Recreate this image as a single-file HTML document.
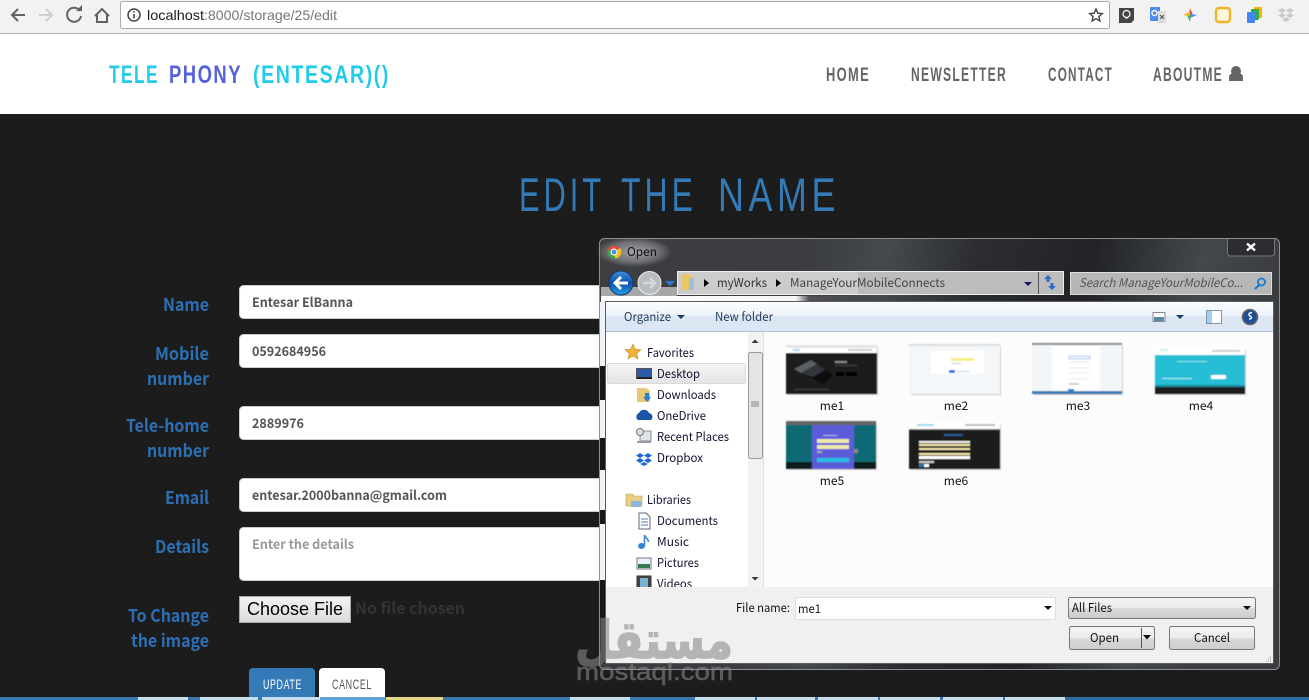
<!DOCTYPE html>
<html><head><meta charset="utf-8"><title>Edit</title>
<style>
html,body{margin:0;padding:0;background:#1c1c1c;overflow:hidden}
svg{display:block}
.d{font-family:"Liberation Sans",sans-serif}
.u{text-transform:uppercase}
.l{font-family:"Noto Sans CJK JP","Liberation Sans",sans-serif;font-weight:700;font-size:17.500px;fill:#2d6fb4}
.i{font-family:"Noto Sans CJK JP","Liberation Sans",sans-serif;font-weight:700;font-size:13px;fill:#555}
.w{font-family:"Noto Sans CJK JP","Liberation Sans",sans-serif;font-size:12px;fill:#101030}
</style></head><body>
<svg width="1309" height="700" viewBox="0 0 1309 700" xmlns="http://www.w3.org/2000/svg">
<defs>
<linearGradient id="glass" x1="0" y1="0" x2="1" y2="0.12">
<stop offset="0" stop-color="#3c3e41"/><stop offset=".3" stop-color="#3a3c3f"/><stop offset=".42" stop-color="#46494d"/><stop offset=".55" stop-color="#2b2d30"/><stop offset=".72" stop-color="#212326"/><stop offset=".88" stop-color="#45484b"/><stop offset="1" stop-color="#3a3c3f"/>
</linearGradient>
<linearGradient id="glow" x1="0" y1="0" x2="1" y2="0"><stop offset="0" stop-color="#fff"/><stop offset=".75" stop-color="#f4f4f4"/><stop offset=".8" stop-color="#fff" stop-opacity=".1"/><stop offset="1" stop-color="#fff" stop-opacity="0"/></linearGradient>
<radialGradient id="titleglow"><stop offset="0" stop-color="#b5b7b9" stop-opacity=".85"/><stop offset=".65" stop-color="#9a9c9e" stop-opacity=".55"/><stop offset="1" stop-color="#9a9c9e" stop-opacity="0"/></radialGradient>
<linearGradient id="tb" x1="0" y1="0" x2="0" y2="1"><stop offset="0" stop-color="#fbfdff"/><stop offset=".45" stop-color="#eef4fb"/><stop offset=".5" stop-color="#dce6f3"/><stop offset="1" stop-color="#dde7f3"/></linearGradient>
<linearGradient id="btn" x1="0" y1="0" x2="0" y2="1"><stop offset="0" stop-color="#f4f4f4"/><stop offset=".5" stop-color="#ececec"/><stop offset=".52" stop-color="#d8d8d8"/><stop offset="1" stop-color="#cdcdcd"/></linearGradient>
<linearGradient id="cf" x1="0" y1="0" x2="0" y2="1"><stop offset="0" stop-color="#f2f2f2"/><stop offset="1" stop-color="#dcdcdc"/></linearGradient>
<linearGradient id="sel" x1="0" y1="0" x2="0" y2="1"><stop offset="0" stop-color="#f6f6f6"/><stop offset="1" stop-color="#e4e4e4"/></linearGradient>
<linearGradient id="back" x1="0" y1="0" x2="0" y2="1"><stop offset="0" stop-color="#3f8fe0"/><stop offset=".5" stop-color="#0d4fa8"/><stop offset="1" stop-color="#2aa0e8"/></linearGradient>
<clipPath id="nav"><rect x="606" y="332" width="158" height="255"/></clipPath>
<filter id="soft" x="-5%" y="-5%" width="110%" height="110%"><feGaussianBlur stdDeviation=".55"/></filter>
</defs>

<!-- browser chrome -->
<rect width="1309" height="33" fill="#f2f2f2"/>
<rect y="33" width="1309" height="1" fill="#b4b4b4"/>
<g fill="none" stroke="#5f6368" stroke-width="2">
<path d="M25 15H12M18 9l-6 6 6 6"/>
<path d="M39 15h13M46 9l6 6-6 6" stroke="#d0d0d0"/>
<path d="M80 11a7 7 0 1 0 1 5"/>
<path d="M95 16l7-7 7 7M97 15v7h10v-7"/>
</g>
<path d="M76 11h6V5z" fill="#5f6368"/>
<rect x="120.500" y="1.500" width="989" height="27" rx="2" fill="#fff" stroke="#a9a9a9"/>
<circle cx="134" cy="15" r="6" fill="none" stroke="#444" stroke-width="1.500"/>
<path d="M134 14v4.500M134 11v1.500" stroke="#444" stroke-width="1.600"/>
<text x="147" y="20" font-family="Liberation Sans" font-size="14" fill="#1a1a1a" textLength="57" lengthAdjust="spacingAndGlyphs">localhost</text>
<text x="204" y="20" font-family="Liberation Sans" font-size="14" fill="#777" textLength="133" lengthAdjust="spacingAndGlyphs">:8000/storage/25/edit</text>
<path d="M1096 9l1.800 4.200 4.500.4-3.400 3 1 4.400-3.900-2.300-3.900 2.300 1-4.400-3.400-3 4.500-.4z" fill="none" stroke="#444" stroke-width="1.400"/>
<path d="M1119 8h15v12l-3 3h-12z" fill="#444"/><circle cx="1126.500" cy="14" r="3.500" fill="none" stroke="#fff" stroke-width="1.200"/><path d="M1125 18h3" stroke="#fff"/>
<rect x="1150" y="7" width="10" height="14" rx="1" fill="#4a8cf0"/><path d="M1158 11h8v12h-8z" fill="#ddd"/><circle cx="1154.500" cy="13" r="2.500" fill="none" stroke="#fff" stroke-width="1.400"/><path d="M1160 15l4 4M1164 15l-4 4" stroke="#555"/>
<path d="M1190 8l3 7-4 0z" fill="#d9534f"/><path d="M1197 15l-7 3 0-4z" fill="#4a8cf0"/><path d="M1190 22l-3-7 4 0z" fill="#4caf50"/><path d="M1183 15l7-3 0 4z" fill="#f4b400"/>
<rect x="1216" y="8" width="14" height="14" rx="3" fill="#fff7dd" stroke="#f0b429" stroke-width="2.400"/>
<rect x="1254" y="7" width="8" height="11" rx="1" fill="#f4b400"/><rect x="1251" y="9" width="8" height="11" rx="1" fill="#34a853"/><rect x="1247" y="12" width="8" height="11" rx="1" fill="#4285f4"/>
<path d="M1282 9l4 2.500-4 2.500-4-2.500zM1290 9l4 2.500-4 2.500-4-2.500zM1282 14l4 2.500-4 2.500-4-2.500zM1290 14l4 2.500-4 2.500-4-2.500zM1286 18l4 2.500-4 2.500-4-2.500z" fill="#c9c9c9" transform="translate(0,-1)"/>

<!-- nav -->
<rect y="34" width="1309" height="80" fill="#fff"/>
<g class="d" font-size="25" font-weight="700">
<text x="109" y="83" fill="#22cbe8" textLength="50" lengthAdjust="spacingAndGlyphs" style="letter-spacing:2px">TELE</text>
<text x="169" y="83" fill="#5561d8" textLength="73" lengthAdjust="spacingAndGlyphs" style="letter-spacing:2px">PHONY</text>
<text x="253" y="83" fill="#22cbe8" textLength="137" lengthAdjust="spacingAndGlyphs" style="letter-spacing:2px">(ENTESAR)()</text>
</g>
<g class="d u" font-size="19.500" font-weight="700" fill="#666" style="letter-spacing:2px">
<text x="826" y="81" textLength="44" lengthAdjust="spacingAndGlyphs">Home</text>
<text x="911" y="81" textLength="96" lengthAdjust="spacingAndGlyphs">Newsletter</text>
<text x="1048" y="81" textLength="65" lengthAdjust="spacingAndGlyphs">contact</text>
<text x="1153" y="81" textLength="70" lengthAdjust="spacingAndGlyphs">AboutMe</text>
</g>
<circle cx="1236" cy="71" r="5" fill="#666"/><path d="M1229 81v-3.500c0-3 2-4 3.500-4h7c1.500 0 3.500 1 3.500 4V81z" fill="#666"/>

<!-- heading -->
<g class="d u" font-size="47" fill="#337ab7" style="letter-spacing:6px">
<text x="519" y="211" textLength="86" lengthAdjust="spacingAndGlyphs">Edit</text>
<text x="621" y="211" textLength="76" lengthAdjust="spacingAndGlyphs">The</text>
<text x="718" y="211" textLength="122" lengthAdjust="spacingAndGlyphs">Name</text>
</g>

<!-- labels -->
<g class="l">
<text x="163" y="311" textLength="46" lengthAdjust="spacingAndGlyphs">Name</text>
<text x="155" y="360" textLength="54" lengthAdjust="spacingAndGlyphs">Mobile</text>
<text x="147" y="385" textLength="62" lengthAdjust="spacingAndGlyphs">number</text>
<text x="126" y="432" textLength="83" lengthAdjust="spacingAndGlyphs">Tele-home</text>
<text x="147" y="457" textLength="62" lengthAdjust="spacingAndGlyphs">number</text>
<text x="165" y="504" textLength="44" lengthAdjust="spacingAndGlyphs">Email</text>
<text x="155" y="553" textLength="54" lengthAdjust="spacingAndGlyphs">Details</text>
<text x="128" y="622" textLength="81" lengthAdjust="spacingAndGlyphs">To Change</text>
<text x="131" y="647" textLength="78" lengthAdjust="spacingAndGlyphs">the image</text>
</g>

<!-- inputs -->
<g fill="#fff" stroke="#ccc">
<rect x="239.500" y="285.500" width="420" height="33" rx="4"/>
<rect x="239.500" y="334.500" width="420" height="33" rx="4"/>
<rect x="239.500" y="406.500" width="420" height="33" rx="4"/>
<rect x="239.500" y="478.500" width="420" height="33" rx="4"/>
<rect x="239.500" y="527.500" width="420" height="53" rx="4"/>
</g>
<g class="i">
<text x="252" y="307" textLength="101" lengthAdjust="spacingAndGlyphs">Entesar ElBanna</text>
<text x="252" y="356" textLength="74" lengthAdjust="spacingAndGlyphs">0592684956</text>
<text x="252" y="428" textLength="52" lengthAdjust="spacingAndGlyphs">2889976</text>
<text x="252" y="500" textLength="195" lengthAdjust="spacingAndGlyphs">entesar.2000banna@gmail.com</text>
<text x="252" y="549" textLength="102" lengthAdjust="spacingAndGlyphs" style="fill:#999">Enter the details</text>
</g>
<rect x="239.500" y="596.500" width="111" height="26" fill="url(#cf)" stroke="#a8a8a8"/>
<text x="247" y="615" font-family="Liberation Sans" font-size="18" fill="#000" textLength="96" lengthAdjust="spacingAndGlyphs">Choose File</text>
<text x="355" y="614" class="i" style="font-size:16px;fill:#333" textLength="110" lengthAdjust="spacingAndGlyphs">No file chosen</text>

<!-- buttons -->
<path d="M249 697v-25a4 4 0 0 1 4-4h58a4 4 0 0 1 4 4v25z" fill="#337ab7"/>
<path d="M319 697v-25a4 4 0 0 1 4-4h58a4 4 0 0 1 4 4v25z" fill="#fff"/>
<g class="d u" font-size="14" style="letter-spacing:1px">
<text x="263" y="689" fill="#fff" textLength="39" lengthAdjust="spacingAndGlyphs">update</text>
<text x="332" y="689" fill="#555" textLength="40" lengthAdjust="spacingAndGlyphs">cancel</text>
</g>

<!-- taskbar -->
<rect y="697" width="1309" height="3" fill="#3a78ad"/>
<g fill="#c6deee">
<rect x="138" y="697" width="50" height="3"/><rect x="200" y="697" width="58" height="3"/><rect x="262" y="697" width="58" height="3"/>
<rect x="570" y="697" width="60" height="3"/><rect x="695" y="697" width="60" height="3"/><rect x="757" y="697" width="58" height="3"/><rect x="818" y="697" width="60" height="3"/><rect x="880" y="697" width="60" height="3"/><rect x="943" y="697" width="60" height="3"/><rect x="1005" y="697" width="60" height="3"/>
</g>
<rect x="386" y="697" width="57" height="3" fill="#e8d488"/>
<rect x="320" y="697" width="65" height="3" fill="#5ea3d6"/>
<rect x="1065" y="697" width="244" height="3" fill="#2f6aa3"/>

<!-- dialog -->
<rect x="599.500" y="238.500" width="680" height="431" rx="5" fill="url(#glass)" stroke="#8c8f92"/>
<rect x="601" y="296" width="260" height="6" fill="url(#glow)"/>
<rect x="601" y="287" width="76" height="10" fill="#fff" opacity=".55"/>
<ellipse cx="634" cy="252" rx="38" ry="15" fill="url(#titleglow)"/>
<!-- left edge light/dark -->
<rect x="600" y="302" width="5" height="362" fill="#f0f4f8"/>
<g fill="#15171a"><rect x="600" y="366" width="5" height="34"/><rect x="600" y="438" width="5" height="32"/><rect x="600" y="510" width="5" height="14"/><rect x="600" y="580" width="5" height="84"/></g>
<rect x="1273" y="302" width="6" height="362" fill="#3a3c3f"/>
<path d="M1227.500 239v14a3 3 0 0 0 3 3h41a3 3 0 0 0 3-3v-14" fill="#2b2d30" stroke="#777"/>
<path d="M1247 243.500l8 7M1255 243.500l-8 7" stroke="#fff" stroke-width="2.400"/>
<circle cx="614" cy="252" r="6.500" fill="#dd4b39"/><path d="M614 252L620 248A6.500 6.500 0 0 1 615 258.400z" fill="#f4c20d"/><path d="M614 252L615 258.400A6.500 6.500 0 0 1 608 249.500z" fill="#3aa757"/><circle cx="614" cy="252" r="3" fill="#4a90e2" stroke="#fff"/>
<text x="627" y="256" class="w" style="fill:#101020" textLength="30" lengthAdjust="spacingAndGlyphs">Open</text>

<circle cx="621" cy="283" r="12" fill="url(#back)" stroke="#123a70"/>
<path d="M628 283h-12M621 277l-6 6 6 6" stroke="#fff" stroke-width="3" fill="none"/>
<circle cx="649.500" cy="283" r="11.500" fill="#b9bcbf" stroke="#eee"/>
<path d="M643 283h11M650 278l5 5-5 5" stroke="#d8d8d8" stroke-width="2.500" fill="none"/>
<path d="M665 281h10l-5 5z" fill="#2a7bd0"/>

<rect x="677.500" y="271.500" width="386" height="23" fill="#bcbcbc" stroke="#eee"/>
<rect x="678" y="272" width="180" height="22" fill="#dcdcdc" opacity=".5"/>
<path d="M681 274h8l5 3v13h-13z" fill="#e9c766"/><rect x="689" y="278" width="5" height="12" fill="#9cc0e0"/>
<path d="M704 279l5 4-5 4zM776 279l5 4-5 4z" fill="#000"/>
<text x="717" y="287" class="w" style="fill:#333" textLength="50" lengthAdjust="spacingAndGlyphs">myWorks</text>
<text x="790" y="287" class="w" style="fill:#444" textLength="155" lengthAdjust="spacingAndGlyphs">ManageYourMobileConnects</text>
<path d="M1024 282h8l-4 4z" fill="#1a1060"/>
<rect x="1038" y="272" width="1" height="22" fill="#555"/>
<path d="M1044 279l4-4 4 4h-2.500v3h-3v-3zM1056 286l-4 4-4-4h2.500v-3h3v3z" fill="#2a6bc0"/>
<rect x="1070.500" y="272.500" width="201" height="22" fill="#b7b7b7" stroke="#ddd"/>
<text x="1079" y="287" class="w" style="fill:#555;font-style:italic" textLength="164" lengthAdjust="spacingAndGlyphs">Search ManageYourMobileCo...</text>
<circle cx="1261.500" cy="282" r="3.500" fill="none" stroke="#1a78d0" stroke-width="1.800"/><path d="M1259 285l-4 4" stroke="#1a78d0" stroke-width="2.200"/>

<!-- panel -->
<rect x="605.500" y="301.500" width="668" height="362" fill="#fff" stroke="#5a5c60"/>
<rect x="606" y="302" width="667" height="29" fill="url(#tb)"/>
<rect x="606" y="331" width="667" height="1" fill="#a9c0d8"/>
<text x="624" y="321" class="w" style="fill:#1e395b" textLength="47" lengthAdjust="spacingAndGlyphs">Organize</text>
<path d="M677 315h8l-4 4z" fill="#1e395b"/>
<text x="715" y="321" class="w" style="fill:#1e395b" textLength="58" lengthAdjust="spacingAndGlyphs">New folder</text>
<rect x="1153" y="312.500" width="12" height="9" fill="#fff" stroke="#889"/><rect x="1154" y="317" width="10" height="4" fill="#5a8aa8"/>
<path d="M1176 315h8l-4 4z" fill="#1e395b"/>
<rect x="1206.500" y="310.500" width="15" height="13" fill="#fff" stroke="#7c97b6"/><rect x="1207" y="311" width="5" height="12" fill="#a8cdea"/>
<circle cx="1250" cy="317" r="7.500" fill="#1f4e96" stroke="#666" stroke-width="1.500"/><path d="M1252 313c-3-1-4 2-2 3s2 3-1 3" stroke="#fff" stroke-width="1.500" fill="none"/>

<!-- nav pane -->
<rect x="606" y="332" width="142" height="255" fill="#fff"/>
<rect x="748" y="332" width="15" height="255" fill="#f2f2f2"/>
<rect x="763" y="332" width="1" height="255" fill="#d9e3ee"/>
<path d="M751.500 343l3.500-3.500 3.500 3.500z" fill="#333"/><path d="M751.500 577l3.500 3.500 3.500-3.500z" fill="#333"/>
<rect x="748.500" y="352.500" width="14" height="106" rx="2" fill="#e4e4e4" stroke="#9a9a9a"/>
<path d="M751 402h8M751 404h8M751 406h8" stroke="#888"/>
<rect x="607.500" y="363.500" width="138" height="20" rx="2" fill="url(#sel)" stroke="#d8d8d8"/>
<g clip-path="url(#nav)">
<g class="w">
<text x="647" y="357" textLength="47" lengthAdjust="spacingAndGlyphs">Favorites</text>
<text x="657" y="378" textLength="43" lengthAdjust="spacingAndGlyphs">Desktop</text>
<text x="657" y="399" textLength="59" lengthAdjust="spacingAndGlyphs">Downloads</text>
<text x="657" y="420" textLength="49" lengthAdjust="spacingAndGlyphs">OneDrive</text>
<text x="657" y="441" textLength="72" lengthAdjust="spacingAndGlyphs">Recent Places</text>
<text x="657" y="462" textLength="46" lengthAdjust="spacingAndGlyphs">Dropbox</text>
<text x="647" y="504" textLength="44" lengthAdjust="spacingAndGlyphs">Libraries</text>
<text x="657" y="525" textLength="61" lengthAdjust="spacingAndGlyphs">Documents</text>
<text x="657" y="546" textLength="32" lengthAdjust="spacingAndGlyphs">Music</text>
<text x="657" y="567" textLength="42" lengthAdjust="spacingAndGlyphs">Pictures</text>
<text x="657" y="588" textLength="35" lengthAdjust="spacingAndGlyphs">Videos</text>
</g>
<path d="M633 344l2.300 5.200 5.700.5-4.300 3.800 1.300 5.500-5-3-5 3 1.300-5.500-4.300-3.800 5.700-.5z" fill="#f2b33d" stroke="#c98a20" stroke-width=".6"/>
<rect x="636.500" y="368.500" width="15" height="10" fill="#2a5aa8" stroke="#555"/><rect x="637" y="377" width="15" height="2" fill="#222"/>
<path d="M637 388h9l4 3v11h-13z" fill="#e8c870"/><path d="M645 393h4v4h2l-4 5-4-5h2z" fill="#2a80d0"/>
<path d="M638 420a4 4 0 0 1 1-7 5.500 5.500 0 0 1 10 0 4 4 0 0 1 2 7z" fill="#1c54a8"/>
<rect x="640" y="431" width="11" height="10" fill="#dfe4ea" stroke="#889"/><circle cx="640" cy="432" r="3.500" fill="#ddd" stroke="#777"/><rect x="637" y="441" width="14" height="2" fill="#99a"/>
<path d="M640 453l4 2.500-4 2.500-4-2.500zM648 453l4 2.500-4 2.500-4-2.500zM640 458l4 2.500-4 2.500-4-2.500zM648 458l4 2.500-4 2.500-4-2.500zM644 462l4 2-4 2-4-2z" fill="#1d68d8"/>
<path d="M626 494h6l2 2h8v10h-16z" fill="#e9cf85" stroke="#b89a50" stroke-width=".6"/><rect x="631" y="501" width="10" height="6" fill="#8cb6dc"/>
<path d="M639 513h7l4 4v12h-11z" fill="#fff" stroke="#667"/><path d="M641 519h7M641 522h7M641 525h7" stroke="#4a80c0"/>
<ellipse cx="641.500" cy="546" rx="3.500" ry="3" fill="#3a80d0"/><path d="M644.500 546v-11c1 3 4 4 4 7" fill="none" stroke="#3a80d0" stroke-width="1.500"/>
<rect x="637" y="558" width="14" height="11" fill="#e8f2f8" stroke="#778"/><rect x="638" y="564" width="12" height="4" fill="#3a7a50"/>
<rect x="637" y="576" width="14" height="14" fill="#444" stroke="#333"/><rect x="640" y="578" width="8" height="10" fill="#7ab0d0"/>
</g>

<!-- file area -->
<rect x="764" y="332" width="509" height="255" fill="#fcfcfc"/>

<g filter="url(#soft)">
<!-- me1 -->
<rect x="788" y="347" width="90" height="48" fill="#aaa" opacity=".6"/>
<rect x="786" y="345" width="91" height="49" fill="#1c1c1c"/>
<rect x="786" y="345" width="91" height="3" fill="#e4e4e4"/><rect x="786" y="348" width="91" height="5" fill="#fff"/>
<rect x="793" y="349" width="7" height="2" fill="#9fd6ec"/><rect x="848" y="349" width="24" height="2" fill="#ccc"/>
<path d="M794 369l17-9 22 15-8 8q-2 1-4 0z" fill="#0e0f11"/><path d="M794 369l17-9 6 4-16 9z" fill="#5b6066"/><path d="M801 373l16-9 8 6-12 7z" fill="#33363b"/>
<rect x="835" y="361" width="12" height="2" fill="#888"/><rect x="835" y="365" width="22" height="1" fill="#444"/>
<rect x="836" y="372" width="8" height="4" rx="1" fill="#000"/><rect x="846" y="372" width="11" height="4" rx="1" fill="#000"/>
<rect x="794" y="389" width="35" height="1" fill="#444"/>
<!-- me2 -->
<rect x="911" y="346" width="90" height="49" fill="#aaa" opacity=".6"/>
<rect x="909" y="344" width="91" height="50" fill="#f4f7f9"/>
<rect x="909" y="344" width="91" height="2" fill="#ddd"/>
<rect x="931" y="351" width="53" height="23" fill="#fff"/>
<rect x="951" y="358" width="23" height="3" fill="#f6ee88"/><rect x="951" y="363" width="10" height="1" fill="#ccc"/><rect x="949" y="370" width="6" height="3" fill="#1a78e8"/><rect x="957" y="371" width="13" height="1" fill="#bcd"/>
<!-- me3 -->
<rect x="1034" y="345" width="89" height="50" fill="#aaa" opacity=".6"/>
<rect x="1032" y="343" width="90" height="51" fill="#f3f6f9"/>
<rect x="1032" y="343" width="90" height="2" fill="#8a8a8a"/>
<rect x="1052" y="346" width="48" height="45" fill="#fff"/>
<rect x="1069" y="356" width="21" height="3" fill="#eaf3ff" stroke="#8cbcf0" stroke-width=".7"/>
<path d="M1069 362h20M1069 368h20M1069 373h20M1069 379h20" stroke="#e2e6ea"/>
<rect x="1069" y="383" width="10" height="2" fill="#ccc"/><rect x="1068" y="389" width="6" height="2" fill="#1a78e8"/>
<rect x="1032" y="391" width="90" height="3" fill="#3f7fb5"/>
<!-- me4 -->
<rect x="1157" y="349" width="89" height="46" fill="#aaa" opacity=".6"/>
<rect x="1155" y="347" width="90" height="47" fill="#1c1c1c"/>
<rect x="1155" y="347" width="90" height="8" fill="#fff"/>
<rect x="1155" y="355" width="90" height="30" fill="#27bdd6"/>
<rect x="1155" y="385" width="90" height="2" fill="#178a9c"/>
<rect x="1211" y="375" width="15" height="4" rx="1" fill="#fff"/><rect x="1177" y="361" width="30" height="1" fill="#8fe0ee"/>
<rect x="1162" y="378" width="30" height="1" fill="#aeeaf4"/>
<rect x="1160" y="349" width="8" height="2" fill="#cfeef6"/><rect x="1212" y="350" width="28" height="2" fill="#ccc"/>
<!-- me5 -->
<rect x="788" y="423" width="89" height="47" fill="#aaa" opacity=".6"/>
<rect x="786" y="421" width="90" height="48" fill="#0f6a74"/>
<rect x="786" y="421" width="90" height="4" fill="#666"/>
<rect x="786" y="462" width="90" height="7" fill="#0f1a1c"/>
<rect x="812" y="425" width="42" height="44" fill="#5a5cd8"/>
<rect x="817" y="439" width="32" height="4" fill="#f0e8a8"/><rect x="817" y="445" width="32" height="4" fill="#f0e8a8"/>
<rect x="817" y="451" width="5" height="2" fill="#aab"/><rect x="817" y="458" width="32" height="4" fill="#20c0e0"/>
<rect x="823" y="435" width="14" height="1" fill="#bbd"/>
<rect x="854" y="449" width="4" height="4" fill="#888"/>
<!-- me6 -->
<rect x="911" y="424" width="90" height="46" fill="#aaa" opacity=".6"/>
<rect x="909" y="422" width="91" height="47" fill="#1c1c1c"/>
<rect x="909" y="422" width="91" height="7" fill="#fff"/><rect x="909" y="429" width="91" height="1" fill="#777"/>
<rect x="917" y="424" width="17" height="2" fill="#9fd6ec"/><rect x="965" y="424" width="30" height="2" fill="#bbb"/>
<rect x="944" y="434" width="19" height="2" fill="#2a5c90"/>
<rect x="919" y="441" width="51" height="2" fill="#eee"/><rect x="919" y="444" width="51" height="2" fill="#f2e6a8"/><rect x="919" y="448" width="51" height="2" fill="#f2e6a8"/><rect x="919" y="453" width="51" height="2" fill="#f2e6a8"/><rect x="919" y="456" width="51" height="3" fill="#fff"/><rect x="919" y="461" width="15" height="2" fill="#ccc"/>
<rect x="919" y="464" width="4" height="3" fill="#337ab7"/><rect x="924" y="464" width="5" height="3" fill="#fff"/>
</g>
<g class="w" text-anchor="middle" style="fill:#111">
<text x="832" y="410" style="fill:#111">me1</text>
<text x="956" y="410" style="fill:#111">me2</text>
<text x="1078" y="410" style="fill:#111">me3</text>
<text x="1201" y="410" style="fill:#111">me4</text>
<text x="832" y="485" style="fill:#111">me5</text>
<text x="956" y="485" style="fill:#111">me6</text>
</g>

<!-- bottom -->
<rect x="606" y="587" width="667" height="76" fill="#f0f0f0"/>
<text x="736" y="612" class="w" style="fill:#111" textLength="54" lengthAdjust="spacingAndGlyphs">File name:</text>
<rect x="795.500" y="597.500" width="260" height="22" fill="#fff" stroke="#d5dfeb"/>
<text x="798" y="613" class="w" style="fill:#111" textLength="23" lengthAdjust="spacingAndGlyphs">me1</text>
<path d="M1044 606h8l-4 4z" fill="#111"/>
<rect x="1068.500" y="597.500" width="187" height="21" rx="2" fill="url(#btn)" stroke="#777"/>
<text x="1072" y="612" class="w" style="fill:#111" textLength="40" lengthAdjust="spacingAndGlyphs">All Files</text>
<path d="M1243 606h8l-4 4z" fill="#111"/>
<rect x="1069.500" y="626.500" width="85" height="23" rx="2" fill="url(#btn)" stroke="#777"/>
<rect x="1141" y="628" width="1" height="20" fill="#555"/>
<text x="1090" y="642" class="w" style="fill:#111" textLength="29" lengthAdjust="spacingAndGlyphs">Open</text>
<path d="M1143 635h8l-4 4.500z" fill="#111"/>
<rect x="1169.500" y="626.500" width="85" height="23" rx="2" fill="url(#btn)" stroke="#777"/>
<text x="1194" y="642" class="w" style="fill:#111" textLength="36" lengthAdjust="spacingAndGlyphs">Cancel</text>
<path d="M1270 657h1M1268 659h1M1270 659h1M1266 661h1M1268 661h1M1270 661h1" stroke="#999"/>

<!-- watermark -->
<g fill="#8a8a8a" opacity=".58">
<text x="575" y="658" font-family="DejaVu Sans,Noto Sans CJK JP,sans-serif" font-weight="700" font-size="52" stroke="#8a8a8a" stroke-width="1.500" textLength="158" lengthAdjust="spacingAndGlyphs">مستقل</text>
<text x="576" y="680" font-family="Liberation Sans" font-size="24" stroke="#8a8a8a" stroke-width=".5" textLength="157" lengthAdjust="spacingAndGlyphs">mostaql.com</text>
</g>
</svg>
</body></html>
